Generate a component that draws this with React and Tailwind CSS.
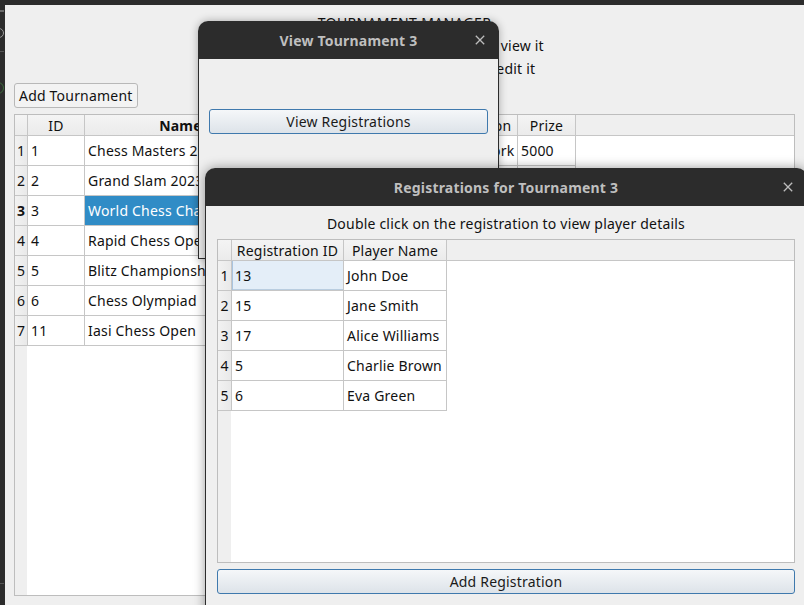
import React from "react";

const FONT = "font-['Noto_Sans','Open_Sans',sans-serif]";

const mainCols = [
  { label: "ID", w: "w-[57px]" },
  { label: "Name", w: "w-[192px]", bold: true },
  { label: "Date", w: "w-[171px]" },
  { label: "Location", w: "w-[70px]" },
  { label: "Prize", w: "w-[58px]" },
];

const tournaments = [
  ["1", "Chess Masters 2023", "2023-05-01", "New York", "5000"],
  ["2", "Grand Slam 2023", "2023-06-10", "London", "7000"],
  ["3", "World Chess Championship", "2023-07-15", "Dubai", "10000"],
  ["4", "Rapid Chess Open", "2023-08-20", "Berlin", "3000"],
  ["5", "Blitz Championship", "2023-09-05", "Paris", "2500"],
  ["6", "Chess Olympiad", "2023-10-01", "Chennai", "8000"],
  ["11", "Iasi Chess Open", "2024-03-12", "Iasi", "1500"],
];

const regCols = [
  { label: "Registration ID", w: "w-[112px]" },
  { label: "Player Name", w: "w-[103px]" },
];

const registrations = [
  ["13", "John Doe"],
  ["15", "Jane Smith"],
  ["17", "Alice Williams"],
  ["5", "Charlie Brown"],
  ["6", "Eva Green"],
];

function CloseIcon() {
  return (
    <svg width="10" height="10" viewBox="0 0 10 10" className="block">
      <path d="M0.8 0.8 L9.2 9.2 M9.2 0.8 L0.8 9.2" stroke="#bdbdbd" strokeWidth="1.3" fill="none" />
    </svg>
  );
}

function TitleBar({ title }) {
  return (
    <div className="relative h-[38px] shrink-0 rounded-t-[10px] bg-[#2c2c2c] flex items-center justify-center">
      <span className="font-bold text-[#bfbfbf] text-[14px]">{title}</span>
      <span className="absolute right-[14px] top-[14px]">
        <CloseIcon />
      </span>
    </div>
  );
}

function HeaderCell({ w, label, bold }) {
  return (
    <div
      className={`${w} shrink-0 h-full border-r border-[#c6c6c6] bg-gradient-to-b from-[#f4f4f4] to-[#ebebeb] flex items-center justify-center whitespace-nowrap overflow-hidden ${
        bold ? "font-bold" : ""
      }`}
    >
      {label}
    </div>
  );
}

function VHeader({ n, bold, w }) {
  return (
    <div
      className={`${w} shrink-0 h-full border-r border-[#c6c6c6] bg-gradient-to-r from-[#f2f2f2] to-[#e9e9e9] flex items-center justify-center ${
        bold ? "font-bold" : ""
      }`}
    >
      {n}
    </div>
  );
}

function BlueButton({ children }) {
  return (
    <div className="h-[25px] rounded-[3px] border border-[#3f79ad] bg-gradient-to-b from-[#f5f7f9] to-[#dde3e9] flex items-center justify-center text-[#1a1a1a]">
      {children}
    </div>
  );
}

export default function App() {
  return (
    <div
      className={`relative w-[804px] h-[605px] overflow-hidden bg-[#2c2c2c] pl-[5px] pt-[5px] flex ${FONT} text-[14px] tracking-[0.2px] text-[#111]`}
    >
      {/* desktop fragments on the left edge */}
      <div className="absolute left-0 top-[10px] w-[4px] h-[2px] bg-[#6a6a6a]" />
      <div className="absolute left-[-6px] top-[28px] w-[10px] h-[10px] rounded-full border border-[#9a9a9a]" />
      <div className="absolute left-0 top-[51px] w-[4px] h-[1px] bg-[#555]" />
      <div className="absolute left-[-8px] top-[82px] w-[12px] h-[12px] rounded-full border border-[#3d6b3d]" />
      <div className="absolute left-0 top-[583px] w-[4px] h-[1px] bg-[#555]" />

      {/* main window */}
      <div className="flex-1 bg-[#efefef] flex flex-col px-[9px] pb-[9px] pt-[6px]">
        <div className="h-[23px] leading-[23px] text-center tracking-[0.35px]">TOURNAMENT MANAGER</div>
        <div className="h-[23px] leading-[23px] text-center">Double click on the tournament to view it</div>
        <div className="h-[23px] leading-[23px] text-center">Right click on the tournament to edit it</div>
        <div className="mt-[3px] flex">
          <div className="h-[25px] px-[4px] rounded-[3px] border border-[#b8b8b8] bg-[#f3f3f3] flex items-center">
            Add Tournament
          </div>
        </div>
        <div className="mt-[6px] flex-1 border border-[#bdbdbd] bg-white flex flex-col overflow-hidden">
          <div className="h-[21px] shrink-0 flex border-b border-[#c6c6c6] bg-[#efefef]">
            <div className="w-[13px] shrink-0 h-full border-r border-[#c6c6c6] bg-gradient-to-b from-[#f4f4f4] to-[#ebebeb]" />
            {mainCols.map((c) => (
              <HeaderCell key={c.label} {...c} />
            ))}
          </div>
          {tournaments.map((row, i) => (
            <div key={i} className="h-[30px] shrink-0 flex">
              <div className="h-full flex border-b border-[#c6c6c6]">
                <VHeader n={i + 1} bold={i === 2} w="w-[13px]" />
                {row.map((v, j) => (
                  <div
                    key={j}
                    className={`${mainCols[j].w} shrink-0 h-full border-r border-[#c6c6c6] flex items-center px-[3px] whitespace-nowrap overflow-hidden ${
                      i === 2 && j === 1 ? "bg-[#308cc6] text-white" : ""
                    }`}
                  >
                    {v}
                  </div>
                ))}
              </div>
            </div>
          ))}
          <div className="flex-1 flex">
            <div className="w-[12px] bg-[#efefef]" />
          </div>
        </div>
      </div>

      {/* View Tournament dialog */}
      <div className="absolute left-[198px] top-[21px] w-[301px] h-[238px] flex flex-col rounded-t-[10px] shadow-[0_0_8px_rgba(0,0,0,0.3)]">
        <TitleBar title="View Tournament 3" />
        <div className="flex-1 bg-[#efefef] border-x border-b border-[#2c2c2c] px-[10px] pt-[50px]">
          <BlueButton>View Registrations</BlueButton>
        </div>
      </div>

      {/* Registrations dialog */}
      <div className="absolute left-[205px] top-[168px] w-[602px] h-[450px] flex flex-col rounded-t-[10px] shadow-[0_0_12px_rgba(0,0,0,0.4)]">
        <TitleBar title="Registrations for Tournament 3" />
        <div className="flex-1 bg-[#efefef] border-x border-[#2c2c2c] px-[11px] pt-[6px] flex flex-col">
          <div className="h-[24px] leading-[24px] text-center">
            Double click on the registration to view player details
          </div>
          <div className="mt-[3px] h-[324px] border border-[#bdbdbd] bg-white flex flex-col overflow-hidden">
            <div className="h-[21px] shrink-0 flex border-b border-[#c6c6c6] bg-[#efefef]">
              <div className="w-[14px] shrink-0 h-full border-r border-[#c6c6c6] bg-gradient-to-b from-[#f4f4f4] to-[#ebebeb]" />
              {regCols.map((c) => (
                <HeaderCell key={c.label} {...c} />
              ))}
            </div>
            {registrations.map((row, i) => (
              <div key={i} className="h-[30px] shrink-0 flex">
                <div className="h-full flex border-b border-[#c6c6c6]">
                  <VHeader n={i + 1} w="w-[14px]" />
                  {row.map((v, j) => (
                    <div
                      key={j}
                      className={`${regCols[j].w} shrink-0 h-full border-r border-[#c6c6c6] flex items-center px-[3px] whitespace-nowrap overflow-hidden ${
                        i === 0 && j === 0 ? "bg-[#e4eef8] shadow-[inset_1px_0_0_#a9c4df,inset_0_-1px_0_#b9cde0]" : ""
                      }`}
                    >
                      {v}
                    </div>
                  ))}
                </div>
              </div>
            ))}
            <div className="flex-1 flex">
              <div className="w-[13px] bg-[#efefef]" />
            </div>
          </div>
          <div className="mt-[6px]">
            <BlueButton>Add Registration</BlueButton>
          </div>
        </div>
      </div>
    </div>
  );
}
